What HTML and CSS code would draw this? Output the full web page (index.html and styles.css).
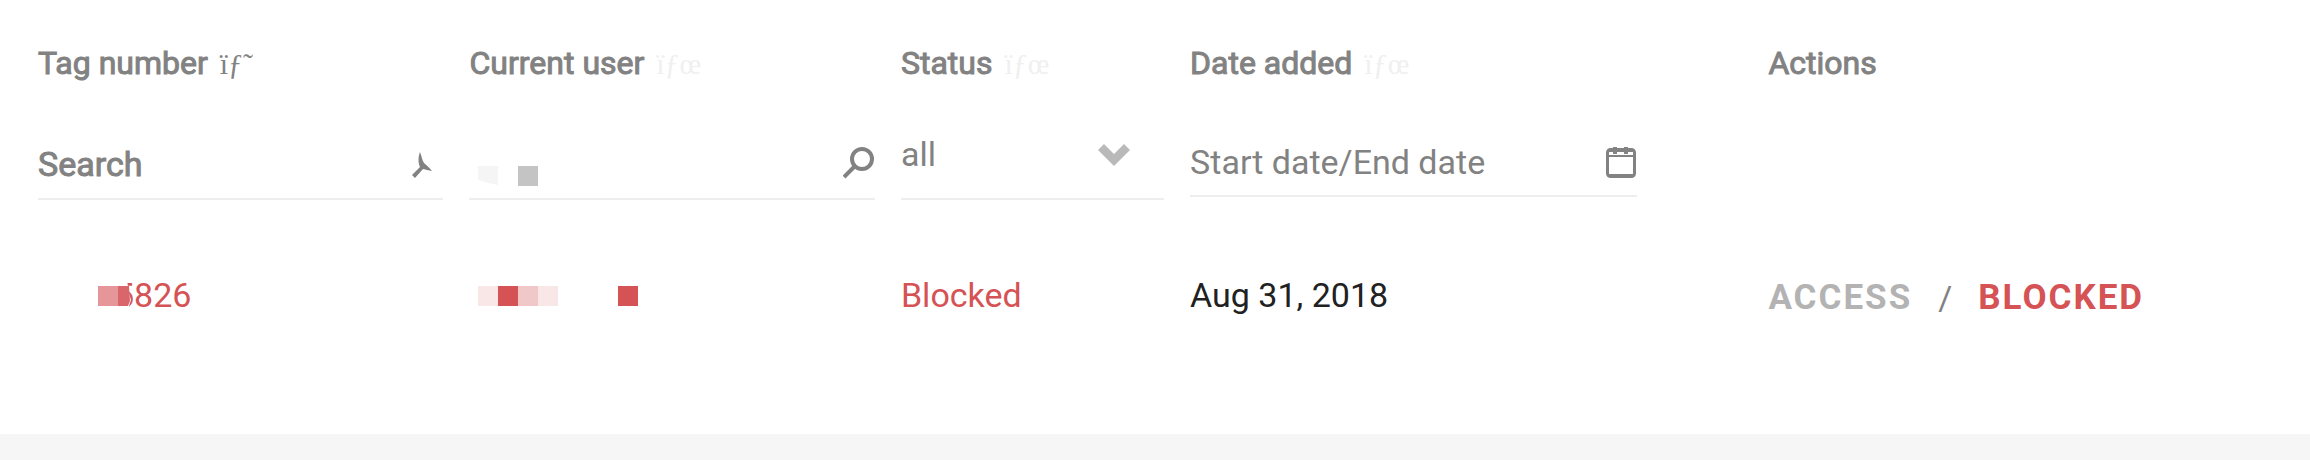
FILE: index.html
```html
<!doctype html>
<html lang="en">
  <head>
    <meta charset="UTF-8" />
    <meta name="viewport" content="width=device-width, initial-scale=1.0" />
    <title>Tags</title>
    <link rel="stylesheet" href="styles.css" />
  </head>
  <body>
    <main class="card">
      <table class="tags">
        <colgroup>
          <col class="col-tag" />
          <col class="col-user" />
          <col class="col-status" />
          <col class="col-date" />
          <col class="col-actions" />
        </colgroup>
        <thead>
          <tr class="headings">
            <th scope="col">Tag number <button type="button" class="sort active">ïƒ˜</button></th>
            <th scope="col">Current user <button type="button" class="sort">ïƒœ</button></th>
            <th scope="col">Status <button type="button" class="sort">ïƒœ</button></th>
            <th scope="col">Date added <button type="button" class="sort">ïƒœ</button></th>
            <th scope="col">Actions</th>
          </tr>
          <tr class="filters">
            <td>
              <div class="field">
                <input type="text" class="search" placeholder="Search" aria-label="Tag number" />
                <svg class="icon" width="32" height="36" viewBox="0 0 32 36">
                  <path d="M9 7C11 12 11 15 13 18C16 21 19 23 21 26C17 25 15 25 12 24L4 33L1 30L9 22C7 18 7 12 9 7Z" />
                </svg>
              </div>
            </td>
            <td>
              <div class="field">
                <input type="text" aria-label="Current user" />
                <svg class="mask mask-input" width="60" height="20" viewBox="0 0 60 20">
                  <path d="M0 0H20V19L11 17L0 14Z" fill="#f5f5f5" />
                  <path d="M40 0H60V20H40Z" fill="#c4c4c4" />
                </svg>
                <svg class="icon" width="32" height="36" viewBox="0 0 32 36">
                  <circle cx="19" cy="14" r="10" fill="none" stroke="#828282" stroke-width="4" />
                  <path d="M12 21L1 32" stroke="#828282" stroke-width="4" />
                </svg>
              </div>
            </td>
            <td>
              <div class="field">
                <select aria-label="Status">
                  <option>all</option>
                  <option>Blocked</option>
                </select>
                <svg class="chevron" width="32" height="22" viewBox="0 0 32 22">
                  <path d="M0 6L6 0L16 10L26 0L32 6L16 22Z" />
                </svg>
              </div>
            </td>
            <td>
              <div class="field field-date">
                <input type="text" placeholder="Start date/End date" aria-label="Date added" />
                <svg class="icon" width="32" height="36" viewBox="0 0 32 36">
                  <rect x="2.5" y="5.5" width="27" height="27" rx="3" fill="none" stroke="#828282" stroke-width="3" />
                  <path d="M8 3H12V10H8ZM19 3H23V10H19ZM3 6H29V8H3ZM3 11H29V13H3ZM3 30H29V32H3Z" />
                </svg>
              </div>
            </td>
            <td></td>
          </tr>
        </thead>
        <tbody>
          <tr>
            <td class="danger">
              <span class="number">5826
                <svg class="mask mask-number" width="36" height="32" viewBox="0 0 36 32">
                  <path d="M0 0H29L31 13L33 20L29 32H0Z" fill="#fff" />
                  <path d="M0 6H20V26H0Z" fill="#e69598" />
                  <path d="M20 6H31L32 21L30 26H20Z" fill="#d9666b" />
                </svg>
              </span>
            </td>
            <td class="danger">
              <svg class="name" width="160" height="20" viewBox="0 0 160 20">
                <path d="M0 0H20V20H0ZM60 0H80V20H60Z" fill="#f9e7e7" />
                <path d="M20 0H40V20H20ZM140 0H160V20H140Z" fill="#d55255" />
                <path d="M40 0H60V20H40Z" fill="#f0c8c9" />
              </svg>
            </td>
            <td class="danger">Blocked</td>
            <td>Aug 31, 2018</td>
            <td>
              <div class="actions">
                <button type="button" class="action">Access</button>
                <span>/</span>
                <button type="button" class="action danger">Blocked</button>
              </div>
            </td>
          </tr>
        </tbody>
      </table>
    </main>
  </body>
</html>
```

FILE: styles.css
```css
* {
  box-sizing: border-box;
}
body {
  margin: 0;
  background: #f6f6f6;
  color: #212121;
  font-family: Roboto, "Liberation Sans", sans-serif;
  font-size: 34px;
  line-height: 40px;
}
button,
input,
select {
  margin: 0;
  padding: 0;
  border: none;
  background: none;
  color: inherit;
  font: inherit;
}
button {
  cursor: pointer;
}
.card {
  padding: 43px 26px 116px 25px;
  background: #fff;
  box-shadow: 0 3px 1px #ececec;
}
.tags {
  width: 100%;
  table-layout: fixed;
  border-collapse: collapse;
}
.tags th,
.tags td {
  padding: 0 13px;
  text-align: left;
  vertical-align: top;
}
.col-tag,
.col-user {
  width: 19.1%;
}
.col-status {
  width: 12.8%;
}
.col-date {
  width: 25.6%;
}
.headings th {
  height: 85px;
  color: #828282;
  font-size: 32px;
  font-weight: 400;
  white-space: nowrap;
  -webkit-text-stroke: 1px;
}
.sort {
  margin-left: 4px;
  color: #f0f0f0;
  font-family: "Liberation Serif", serif;
  font-size: 30px;
  font-weight: 400;
  line-height: 40px;
  -webkit-text-stroke: 0;
}
.sort.active {
  color: #828282;
}

/* filter row */
.filters td {
  height: 147px;
}
.field {
  position: relative;
  display: flex;
  align-items: center;
  height: 72px;
  border-bottom: 2px solid #eee;
  color: #828282;
}
.field input,
.field select {
  flex: 1;
  min-width: 0;
  height: 40px;
  outline: none;
}
.field select {
  height: 64px;
  padding-bottom: 18px;
  appearance: none;
}
.field input::placeholder {
  color: #828282;
  opacity: 1;
}
.field .search {
  height: 42px;
  padding-top: 2px;
  -webkit-text-stroke: 1px;
}
.field-date {
  width: 81%;
  height: 69px;
}
.icon {
  flex: none;
  fill: #828282;
}
.chevron {
  position: absolute;
  right: 34px;
  top: 16px;
  fill: #b9b9b9;
  pointer-events: none;
}
.mask {
  position: absolute;
}
.mask-input {
  left: 9px;
  bottom: 12px;
}

.tags .danger {
  color: #d55255;
}
.number {
  position: relative;
  display: inline-block;
  padding-left: 77px;
}
.mask-number {
  left: 60px;
  top: 5px;
}
.name {
  display: block;
  margin: 11px 9px;
}
.actions {
  display: flex;
  gap: 26px;
  padding-top: 3px;
  color: #828282;
}
.action {
  color: #b3b3b3;
  font-size: 35px;
  font-weight: 700;
  letter-spacing: 2px;
  text-transform: uppercase;
}
```
